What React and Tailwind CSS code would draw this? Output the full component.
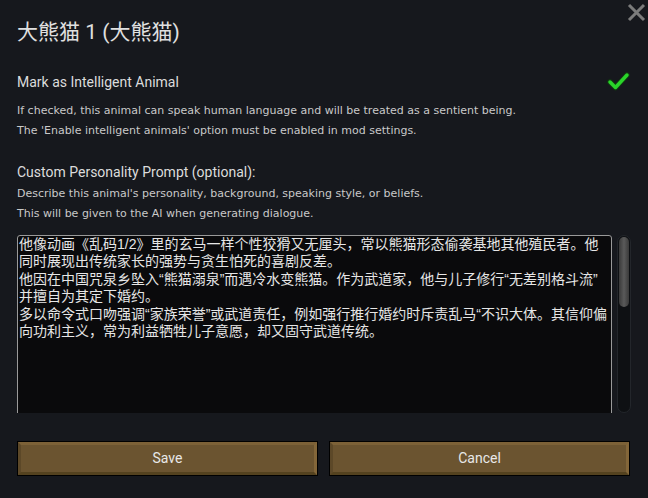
import React from "react";

const zh = '"Liberation Sans", "Noto Sans CJK SC", sans-serif';

function Bevel({ children }) {
  return (
    <button className="relative flex-1 h-[35px] border border-black bg-[#6b5430] text-[14px] text-[#e8e8e8] [font-family:Roboto,sans-serif]">
      <span className="absolute inset-0 border-[3px] border-t-[#7c6137] border-l-[#5c4828] border-b-[#54421f] border-r-[#836639]" />
      <span className="relative">{children}</span>
    </button>
  );
}

const lines = [
  "他像动画《乱码1/2》里的玄马一样个性狡猾又无厘头，常以熊猫形态偷袭基地其他殖民者。他",
  "同时展现出传统家长的强势与贪生怕死的喜剧反差。",
  "他因在中国咒泉乡坠入“熊猫溺泉”而遇冷水变熊猫。作为武道家，他与儿子修行“无差别格斗流”",
  "并擅自为其定下婚约。",
  "多以命令式口吻强调“家族荣誉”或武道责任，例如强行推行婚约时斥责乱马“不识大体。其信仰偏",
  "向功利主义，常为利益牺牲儿子意愿，却又固守武道传统。",
];

export default function App() {
  return (
    <div className="relative w-[648px] h-[498px] bg-[#16181d] overflow-hidden px-[17px] text-[#e0e0e0]">
      <svg className="absolute left-[627px] top-[3px]" width="19" height="19" viewBox="0 0 19 19">
        <path d="M2 2 L17 17 M17 2 L2 17" stroke="#7b7b7b" strokeWidth="3" />
      </svg>
      <h1 className="pt-[18px] text-[21px] leading-[28px]" style={{ fontFamily: 'Roboto, "Noto Sans CJK SC", sans-serif' }}>
        大熊猫 1 (大熊猫)
      </h1>
      <div className="mt-[27px] flex items-center justify-between">
        <div className="text-[14px] leading-[16px] text-[#dcdcdc] [font-family:Roboto,sans-serif]">
          Mark as Intelligent Animal
        </div>
        <svg className="mr-[1px] -mt-[2px]" width="23" height="20" viewBox="0 0 23 20">
          <path d="M3 11 L8.5 16.5 L20 4" fill="none" stroke="#103a10" strokeWidth="5.5" strokeLinecap="round" strokeLinejoin="round" />
          <path d="M3 11 L8.5 16.5 L20 4" fill="none" stroke="#2ad42a" strokeWidth="3.5" strokeLinecap="round" strokeLinejoin="round" />
        </svg>
      </div>
      <div className="mt-[10px] text-[11px] leading-[20px] text-[#c9c9c9] [font-family:'DejaVu_Sans',sans-serif]">
        <div>If checked, this animal can speak human language and will be treated as a sentient being.</div>
        <div>The 'Enable intelligent animals' option must be enabled in mod settings.</div>
      </div>
      <div className="mt-[23px] text-[14px] leading-[16px] text-[#dcdcdc] [font-family:Roboto,sans-serif]">
        Custom Personality Prompt (optional):
      </div>
      <div className="mt-[4px] text-[11px] leading-[20px] text-[#c9c9c9] [font-family:'DejaVu_Sans',sans-serif]">
        <div>Describe this animal's personality, background, speaking style, or beliefs.</div>
        <div>This will be given to the AI when generating dialogue.</div>
      </div>
      <div className="mt-[11px] flex gap-[5px] h-[178px] overflow-hidden">
        <div className="w-[595px] h-[200px] shrink-0 overflow-hidden border border-[#9a9a9a] rounded-[3px] bg-[#0a0a0c] px-[1px] text-[14px] leading-[17.4px] text-[#e6e6e6] whitespace-nowrap" style={{ fontFamily: zh }}>
          {lines.map((l, i) => (
            <div key={i}>{l}</div>
          ))}
        </div>
        <div className="w-[14px] h-[178px] shrink-0 rounded-full bg-[#0e1013] border border-[#23262b] p-[1px]">
          <div className="h-[70px] rounded-full bg-gradient-to-r from-[#3a3a3a] via-[#5a5a5a] to-[#3a3a3a]" />
        </div>
      </div>
      <div className="mt-[28px] flex gap-[11px] pr-[1px]">
        <Bevel>Save</Bevel>
        <Bevel>Cancel</Bevel>
      </div>
    </div>
  );
}
